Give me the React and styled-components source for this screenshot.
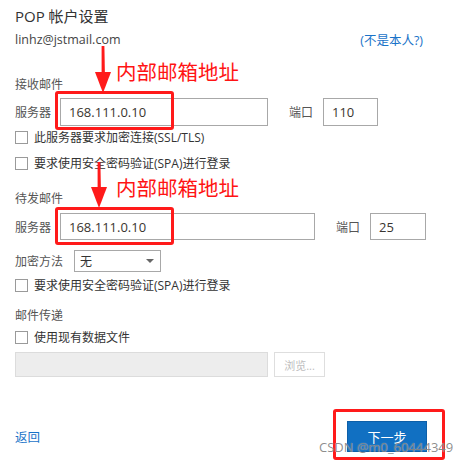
import React from "react";
import styled, { createGlobalStyle } from "styled-components";

const GlobalStyle = createGlobalStyle`
  html, body {
    margin: 0;
    padding: 0;
    background: #ffffff;
  }
  body {
    font-family: "Open Sans", "Noto Sans CJK SC", sans-serif;
    color: #333;
  }
`;

function Checkbox({ label }) {
  return (
    <CheckRow>
      <Box />
      <span>{label}</span>
    </CheckRow>
  );
}

function RedArrow({ top, left, height }) {
  return (
    <ArrowSvg style={{ top, left }} width="18" height={height} viewBox={`0 0 18 ${height}`}>
      <path d={`M8 0 L10 0 L10.8 ${height - 20} L9.6 ${height - 20} Z`} fill="#ff1a1a" />
      <rect x="7.6" y="0" width="2.8" height={height - 18} fill="#ff1a1a" />
      <path d={`M1 ${height - 21} L17 ${height - 21} L9 ${height} Z`} fill="#ff1a1a" />
    </ArrowSvg>
  );
}

export default function App() {
  return (
    <Page>
      <GlobalStyle />
      <Title>POP 帐户设置</Title>
      <EmailRow>
        <Email>linhz@jstmail.com</Email>
        <Link>(不是本人?)</Link>
      </EmailRow>

      <Section $mt={25}>接收邮件</Section>
      <ServerRow $mt={3}>
        <Label>服务器</Label>
        <Input $w={208} $h={28}>168.111.0.10</Input>
        <PortLabel $ml={21}>端口</PortLabel>
        <Input $w={55} $h={28}>110</Input>
      </ServerRow>
      <Checkbox label="此服务器要求加密连接(SSL/TLS)" />
      <Spacer $h={4} />
      <Checkbox label="要求使用安全密码验证(SPA)进行登录" />

      <Section $mt={15}>待发邮件</Section>
      <ServerRow $mt={4}>
        <Label>服务器</Label>
        <Input $w={255} $h={27}>168.111.0.10</Input>
        <PortLabel $ml={21}>端口</PortLabel>
        <Input $w={56} $h={27}>25</Input>
      </ServerRow>
      <SelectRow>
        <Label $w={59}>加密方法</Label>
        <Select>
          <span>无</span>
          <Caret />
        </Select>
      </SelectRow>
      <Spacer $h={2} />
      <Checkbox label="要求使用安全密码验证(SPA)进行登录" />

      <Section $mt={10}>邮件传递</Section>
      <Checkbox label="使用现有数据文件" />
      <FileRow>
        <FileInput />
        <BrowseButton>浏览...</BrowseButton>
      </FileRow>

      <Footer>
        <Link>返回</Link>
        <NextButton>下一步</NextButton>
      </Footer>

      <RedArrow top={46} left={94} height={47} />
      <RedArrow top={162} left={90} height={46} />
      <Note style={{ top: 58, left: 116 }}>内部邮箱地址</Note>
      <Note style={{ top: 174, left: 116 }}>内部邮箱地址</Note>
      <RedFrame style={{ top: 91, left: 55, width: 119, height: 39 }} />
      <RedFrame style={{ top: 207, left: 55, width: 119, height: 38 }} />
      <RedFrame style={{ top: 409, left: 333, width: 112, height: 51 }} />
      <Watermark>CSDN @m0_60444349</Watermark>
    </Page>
  );
}

const Page = styled.div`
  position: relative;
  width: 412px;
  height: 463px;
  padding: 4px 29px 0 15px;
  display: flex;
  flex-direction: column;
  box-sizing: content-box;
  font-size: 12px;
`;

const Title = styled.div`
  height: 24px;
  line-height: 24px;
  font-size: 15px;
  color: #333;
`;

const EmailRow = styled.div`
  height: 22px;
  display: flex;
  align-items: center;
  justify-content: space-between;
  padding-right: 4px;
`;

const Email = styled.span`
  font-size: 12.5px;
  color: #444;
`;

const Link = styled.span`
  color: #1a73c8;
  font-size: 12.5px;
`;

const Section = styled.div`
  margin-top: ${(p) => p.$mt}px;
  height: 20px;
  line-height: 20px;
  color: #555;
`;

const Spacer = styled.div`
  height: ${(p) => p.$h}px;
`;

const ServerRow = styled.div`
  margin-top: ${(p) => p.$mt}px;
  display: flex;
  align-items: center;
  color: #555;
`;

const Label = styled.span`
  width: ${(p) => p.$w || 45}px;
  color: #555;
`;

const PortLabel = styled.span`
  margin-left: ${(p) => p.$ml}px;
  width: 34px;
`;

const Input = styled.div`
  width: ${(p) => p.$w}px;
  height: ${(p) => p.$h}px;
  box-sizing: border-box;
  border: 1px solid #a8a8a8;
  padding-left: 8px;
  display: flex;
  align-items: center;
  font-size: 13px;
  color: #3a3530;
  background: #fff;
`;

const CheckRow = styled.div`
  height: 22px;
  display: flex;
  align-items: center;
  gap: 6px;
  color: #333;
  font-size: 12px;
`;

const Box = styled.span`
  width: 13px;
  height: 13px;
  box-sizing: border-box;
  border: 1px solid #9a9a9a;
  background: #fff;
`;

const SelectRow = styled.div`
  margin-top: 10px;
  display: flex;
  align-items: center;
`;

const Select = styled.div`
  width: 87px;
  height: 22px;
  box-sizing: border-box;
  border: 1px solid #a8a8a8;
  display: flex;
  align-items: center;
  justify-content: space-between;
  padding: 0 6px 0 5px;
  font-size: 12px;
  color: #333;
`;

const Caret = styled.span`
  width: 0;
  height: 0;
  border-left: 4px solid transparent;
  border-right: 4px solid transparent;
  border-top: 4px solid #666;
`;

const FileRow = styled.div`
  margin-top: 4px;
  display: flex;
  gap: 6px;
`;

const FileInput = styled.div`
  width: 253px;
  height: 25px;
  box-sizing: border-box;
  background: #ededed;
  border: 1px solid #dcdcdc;
`;

const BrowseButton = styled.div`
  width: 51px;
  height: 25px;
  box-sizing: border-box;
  border: 1px solid #dedede;
  background: #fff;
  color: #bdbdbd;
  font-size: 11px;
  display: flex;
  align-items: center;
  justify-content: center;
`;

const Footer = styled.div`
  margin-top: 44px;
  display: flex;
  align-items: center;
  justify-content: space-between;
`;

const NextButton = styled.div`
  width: 80px;
  height: 31px;
  background: #1170c2;
  border: 1px solid #0d5fa8;
  box-sizing: border-box;
  color: #fff;
  font-size: 13px;
  display: flex;
  align-items: center;
  justify-content: center;
`;

const ArrowSvg = styled.svg`
  position: absolute;
`;

const Note = styled.div`
  position: absolute;
  font-size: 20.5px;
  line-height: 26px;
  color: #ff1414;
  font-family: "Noto Sans CJK SC", sans-serif;
  white-space: nowrap;
`;

const RedFrame = styled.div`
  position: absolute;
  box-sizing: border-box;
  border: 3px solid #ff1a1a;
  border-radius: 3px;
`;

const Watermark = styled.div`
  position: absolute;
  left: 319px;
  top: 438px;
  font-size: 13px;
  line-height: 18px;
  color: rgba(120, 120, 120, 0.85);
  text-shadow: 0 0 1px rgba(255, 255, 255, 0.6);
  white-space: nowrap;
`;
